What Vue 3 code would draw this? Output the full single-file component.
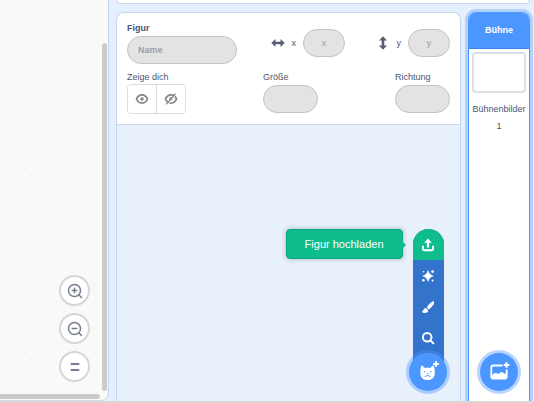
<script setup>
import { ref } from 'vue'

const spriteName = ref('')
const posX = ref('')
const posY = ref('')
const size = ref('')
const direction = ref('')
const visible = ref(true)
const backdropCount = ref(1)
</script>

<template>
  <div class="app">
    <section class="workspace" aria-label="Skriptbereich">
      <div class="zoom-controls">
        <button type="button" class="zoom" aria-label="Vergrößern">
          <svg viewBox="0 0 16 16" width="16" height="16">
            <circle cx="7.500" cy="7.500" r="6" />
            <path d="M12 12l2.500 2.500M5.200 7.500h4.600M7.500 5.200v4.600" />
          </svg>
        </button>
        <button type="button" class="zoom" aria-label="Verkleinern">
          <svg viewBox="0 0 16 16" width="16" height="16">
            <circle cx="7.500" cy="7.500" r="6" />
            <path d="M12 12l2.500 2.500M5.200 7.500h4.600" />
          </svg>
        </button>
        <button type="button" class="zoom" aria-label="Zoom zurücksetzen">
          <svg viewBox="0 0 16 16" width="16" height="16">
            <path class="thick" d="M4.500 5h7M4.500 11h7" />
          </svg>
        </button>
      </div>
      <div class="scroll vertical"></div>
      <div class="scroll horizontal"></div>
    </section>

    <main class="side">
      <div class="stage-card"></div>
      <div class="targets">
        <section class="sprites">
          <form class="info" @submit.prevent>
            <div class="row centered">
              <div class="field">
                <label class="strong" for="name">Figur</label>
                <input id="name" v-model="spriteName" class="name" type="text" placeholder="Name" disabled />
              </div>
              <div class="inline">
                <svg class="arrow" viewBox="0 0 14 14" width="14" height="14">
                  <path d="M0.3 7L4.500 3v2.700h5V3L13.700 7L9.500 11V8.300h-5V11z" />
                </svg>
                <label for="x">x</label>
                <input id="x" v-model="posX" class="coord" type="text" placeholder="x" disabled />
              </div>
              <div class="inline">
                <svg class="arrow narrow" viewBox="3 0 8 14" width="8" height="14">
                  <path d="M7 0.300L11 4.500H8.300v5H11L7 13.700L3 9.500h2.700v-5H3z" />
                </svg>
                <label for="y">y</label>
                <input id="y" v-model="posY" class="coord" type="text" placeholder="y" disabled />
              </div>
            </div>
            <div class="row">
              <div class="field tight">
                <span id="show-label" class="label">Zeige dich</span>
                <div class="toggle" role="group" aria-labelledby="show-label">
                  <button type="button" aria-label="Anzeigen" @click="visible = true">
                    <svg viewBox="0 0 14 12" width="14" height="12">
                      <path class="eye" d="M1.500 6C3.800 0.600 10.200 0.600 12.500 6C10.200 11.400 3.800 11.400 1.500 6z" />
                      <circle cx="7" cy="6" r="1.800" />
                    </svg>
                  </button>
                  <button type="button" aria-label="Verstecken" @click="visible = false">
                    <svg viewBox="0 0 14 12" width="14" height="12">
                      <path class="eye" d="M1.500 6C3.800 0.600 10.200 0.600 12.500 6C10.200 11.400 3.800 11.400 1.500 6z" />
                      <circle cx="7" cy="6" r="1.800" />
                      <path class="gap" d="M3.400 11.800L12 1.600" />
                      <path class="slash" d="M2.200 11.400L11.600 0.600" />
                    </svg>
                  </button>
                </div>
              </div>
              <div class="field">
                <label for="size">Größe</label>
                <input id="size" v-model="size" class="small" type="text" disabled />
              </div>
              <div class="field">
                <label for="direction">Richtung</label>
                <input id="direction" v-model="direction" class="small" type="text" disabled />
              </div>
            </div>
          </form>

          <div class="menu">
            <div class="more">
              <button type="button" class="item active" aria-label="Figur hochladen" aria-describedby="upload-tip">
                <svg viewBox="0 0 14 14" width="14" height="14">
                  <path class="stroke" d="M2 8.500V11a1.300 1.300 0 0 0 1.300 1.300h7.400A1.300 1.300 0 0 0 12 11V8.500" />
                  <path d="M7 0.600L10.800 4.800H8.100V9.400H5.900V4.800H3.200z" />
                </svg>
                <span id="upload-tip" class="tooltip" role="tooltip">Figur hochladen</span>
              </button>
              <button type="button" class="item" aria-label="Überraschung">
                <svg viewBox="0 0 14 14" width="14" height="14">
                  <path d="M7 1.600Q8 6 12.200 7Q8 8 7 12.400Q6 8 1.800 7Q6 6 7 1.600z" stroke="#fff" stroke-width=".5" />
                  <circle cx="11.600" cy="2.600" r="1.400" />
                  <circle cx="2.400" cy="11.200" r="1.300" />
                  <circle cx="2.600" cy="2.800" r=".8" />
                  <circle cx="11.600" cy="11.400" r="1" />
                </svg>
              </button>
              <button type="button" class="item" aria-label="Malen">
                <svg viewBox="0 0 14 14" width="14" height="14">
                  <path d="M13 1Q13.600 3.600 11 6.600Q9.400 8.600 7.800 9.400L5.800 7.400Q6.600 5.600 8.600 3.800Q11.400 1.200 13 1z" />
                  <path d="M5 8L7.200 10.200Q7 12.800 4 13Q1.600 13 .8 11.400Q2.200 11.300 2.400 9.800Q3 8 5 8z" />
                </svg>
              </button>
              <button type="button" class="item" aria-label="Figur wählen">
                <svg viewBox="0 0 14 14" width="14" height="14">
                  <circle class="lens" cx="6.200" cy="6.200" r="4.300" />
                  <path class="lens" d="M9.600 9.600L12.400 12.400" />
                </svg>
              </button>
            </div>
            <button type="button" class="round" aria-label="Figur hinzufügen">
              <svg viewBox="0 0 22 22" width="22" height="22">
                <path d="M4 5.200Q4.300 4 5.300 4.800L8 7Q10.500 6.200 13 7L15.700 4.800Q16.800 4 17 5.200Q18.200 9 17.800 13.400Q16.800 18.800 10.500 19Q4.200 18.800 3.400 13.400Q3 9 4 5.200z" />
                <path class="detail" d="M9.400 12h2.400l-1.200 1.100z" />
                <path class="mouth" d="M7.800 15.400Q9.600 15.800 10.600 13.800Q11.600 15.800 13.400 15.400" />
                <circle class="dot" cx="7.400" cy="10.800" r=".7" />
                <circle class="dot" cx="13.800" cy="10.800" r=".7" />
                <path class="plus" d="M19 .2v5.600M16.200 3h5.600" />
              </svg>
            </button>
          </div>
        </section>

        <section class="stage">
          <h2>Bühne</h2>
          <div class="thumb"></div>
          <p>Bühnenbilder</p>
          <p>{{ backdropCount }}</p>
          <div class="menu">
            <button type="button" class="round" aria-label="Bühnenbild hinzufügen">
              <svg viewBox="0 0 22 22" width="22" height="22">
                <path class="frame" d="M14.500 4.500H5.300A2 2 0 0 0 3.300 6.500V15.500A2 2 0 0 0 5.300 17.500H16.700A2 2 0 0 0 18.700 15.500V8.500" />
                <path d="M4 14.200Q6.800 10.600 9.400 12.600Q10.800 13.400 12 11.800Q14 10.200 15.400 12Q16.800 13.200 18 12.600V17H4z" />
                <path class="plus" d="M18.500 1.200v5.600M15.700 4h5.600" />
              </svg>
            </button>
          </div>
        </section>
      </div>
    </main>
  </div>
</template>

<style>
body {
  margin: 0;
  background: #ddd7d3;
}
</style>

<style scoped>
* {
  box-sizing: border-box;
}

.app {
  display: grid;
  grid-template-columns: 109fr 425fr;
  height: 100vh;
  border-bottom: 2px solid #ddd7d3;
  overflow: hidden;
  background: #e5f0ff;
  color: #4d556f;
  font: 9px/12px "Liberation Sans", Arial, sans-serif;
}

button {
  display: flex;
  align-items: center;
  justify-content: center;
  margin: 0;
  padding: 0;
  border: 0;
  font: inherit;
  cursor: pointer;
}

.workspace {
  position: relative;
  display: flex;
  flex-direction: column;
  align-items: flex-end;
  justify-content: flex-end;
  padding: 0 18px 18px 0;
  border-right: 1px solid #c3d2e8;
  border-bottom: 1px solid #d5dbe5;
  border-bottom-right-radius: 8px;
  background: #f9f9f9 radial-gradient(circle, #efeff1 1px, transparent 1px) 13px 19px / 23px 23px;
}

.zoom-controls {
  display: flex;
  flex-direction: column;
  gap: 7px;
}

.zoom {
  width: 31px;
  height: 31px;
  border: 2px solid #d6d6d9;
  border-radius: 50%;
  background: #fff;
}

.zoom svg {
  fill: none;
  stroke: #777d91;
  stroke-width: 1.5;
  stroke-linecap: round;
}

.zoom .thick {
  stroke-width: 2;
}

.scroll {
  position: absolute;
  border-radius: 3px;
  background: #cbcbcb;
}

.vertical {
  top: 43px;
  right: 1px;
  bottom: 9px;
  width: 5px;
}

.horizontal {
  left: 0;
  right: 8px;
  bottom: 1px;
  height: 5px;
  border-radius: 0 3px 3px 0;
}

.side {
  display: grid;
  grid-template-rows: 4px 1fr;
  gap: 8px;
  min-width: 0;
  padding: 0 4px 0 7px;
}

.stage-card {
  border: 1px solid #c9d6e9;
  border-top: 0;
  border-radius: 0 0 6px 6px;
  background: #fff;
}

.targets {
  display: grid;
  grid-template-columns: 1fr 62px;
  gap: 7px;
}

.sprites {
  position: relative;
  border: 1px solid #c6d5eb;
  border-bottom: 0;
  border-radius: 8px 8px 0 0;
  background: #e8f0fc;
}

.info {
  display: flex;
  flex-direction: column;
  gap: 7px;
  padding: 9px 10px 10px;
  border-bottom: 1px solid #cdd9ea;
  border-radius: 7px 7px 0 0;
  background: #fff;
}

.row {
  display: flex;
  justify-content: space-between;
}

.centered {
  align-items: center;
}

.field {
  display: flex;
  flex-direction: column;
  gap: 2px;
}

.tight {
  gap: 1px;
}

.strong {
  font-weight: bold;
}

.inline {
  display: flex;
  align-items: center;
  gap: 7px;
}

.arrow {
  fill: #575e75;
}

.narrow {
  margin-right: 3px;
}

input {
  height: 28px;
  margin: 0;
  padding: 0 10px;
  border: 1px solid #c4c4c4;
  border-radius: 14px;
  background: #e3e3e3;
  color: #575e75;
  font: bold 9px/12px "Liberation Sans", Arial, sans-serif;
}

input::placeholder {
  color: #9a9fab;
  opacity: 1;
}

.name {
  width: 110px;
}

.coord {
  width: 42px;
  font-weight: normal;
  text-align: center;
}

.small {
  width: 55px;
}

.toggle {
  display: flex;
  border: 1px solid #dcdcdc;
  border-radius: 4px;
}

.toggle button {
  width: 28px;
  height: 28px;
  border-radius: 3px;
  background: #fff;
}

.toggle button + button {
  width: 29px;
  border-left: 1px solid #dcdcdc;
  border-radius: 0 3px 3px 0;
}

.toggle svg {
  fill: #858585;
}

.toggle .eye {
  fill: none;
  stroke: #858585;
  stroke-width: 1.8;
}

.toggle .gap {
  stroke: #fff;
  stroke-width: 1;
}

.toggle .slash {
  stroke: #858585;
  stroke-width: 1.2;
}

.menu {
  position: absolute;
  right: 13px;
  bottom: 10px;
  display: flex;
  flex-direction: column;
  align-items: center;
}

.more {
  padding-bottom: 20px;
  margin-bottom: -20px;
  border-radius: 16px 16px 0 0;
  background: #3373cc;
}

.item {
  position: relative;
  width: 31px;
  height: 31px;
  background: #3373cc;
}

.active {
  border-radius: 16px 16px 0 0;
  background: #0fbd8c;
}

.menu svg {
  fill: #fff;
}

.item .stroke,
.item .lens {
  fill: none;
  stroke: #fff;
  stroke-width: 2;
  stroke-linecap: round;
}

.tooltip {
  position: absolute;
  top: 0;
  right: calc(100% + 10px);
  padding: 8px 18px;
  border: 1px solid #0ca97d;
  border-radius: 4px;
  background: #0fbd8c;
  box-shadow: 0 0 5px rgba(0, 0, 0, 0.25);
  color: #fff;
  font-size: 11px;
  line-height: 12px;
  white-space: nowrap;
}

.tooltip::after {
  content: "";
  position: absolute;
  top: 11px;
  left: 100%;
  border: 4px solid transparent;
  border-right: 0;
  border-left-color: #0fbd8c;
}

.round {
  position: relative;
  width: 38px;
  height: 38px;
  border-radius: 50%;
  background: #4c97ff;
  box-shadow: 0 0 0 3px rgba(76, 151, 255, 0.4);
}

.round .detail,
.round .dot {
  fill: #4c97ff;
}

.round .mouth {
  fill: none;
  stroke: #4c97ff;
  stroke-width: 1;
}

.round .plus {
  fill: none;
  stroke: #fff;
  stroke-width: 2;
}

.round .frame {
  fill: none;
  stroke: #fff;
  stroke-width: 1.8;
}

.stage {
  position: relative;
  border: 1px solid #4c97ff;
  border-bottom: 0;
  border-radius: 8px 8px 0 0;
  background: #fff;
  box-shadow: 0 0 0 3px #b3d1fb;
  text-align: center;
}

.stage .menu {
  right: 11px;
}

.stage h2 {
  margin: 0;
  padding: 11px 0 12px;
  border-bottom: 1px solid #3d85ee;
  border-radius: 7px 7px 0 0;
  background: #4c97ff;
  color: #fff;
  font-size: 9px;
  line-height: 12px;
}

.thumb {
  height: 41px;
  margin: 3px 3px 10px;
  border: 2px solid #dcdfe5;
  border-radius: 4px;
  background: #fff;
}

.stage p {
  margin: 0 0 5px;
}
</style>
